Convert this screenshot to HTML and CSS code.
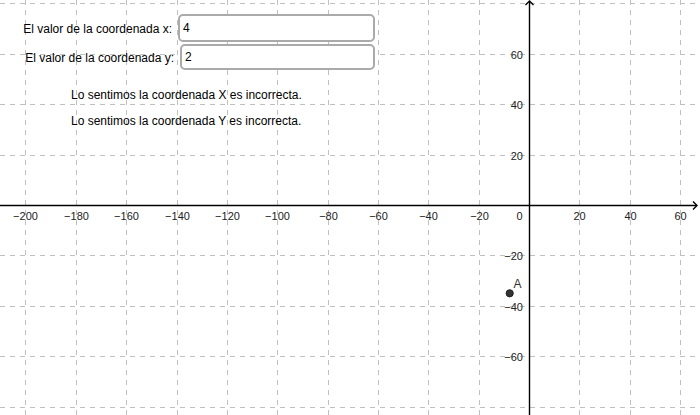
FILE: index.html
```html
<!DOCTYPE html>
<html lang="es">
<head>
<meta charset="utf-8">
<title>Coordenadas</title>
<link rel="stylesheet" href="styles.css">
</head>
<body>
<div class="canvas">
  <svg class="graph" width="700" height="415" viewBox="0 0 700 415" xmlns="http://www.w3.org/2000/svg">
    <g class="grid">
      <line x1="25.5" y1="0" x2="25.5" y2="415"/>
      <line x1="76.5" y1="0" x2="76.5" y2="415"/>
      <line x1="126.5" y1="0" x2="126.5" y2="415"/>
      <line x1="177.5" y1="0" x2="177.5" y2="415"/>
      <line x1="227.5" y1="0" x2="227.5" y2="415"/>
      <line x1="277.5" y1="0" x2="277.5" y2="415"/>
      <line x1="328.5" y1="0" x2="328.5" y2="415"/>
      <line x1="378.5" y1="0" x2="378.5" y2="415"/>
      <line x1="428.5" y1="0" x2="428.5" y2="415"/>
      <line x1="479.5" y1="0" x2="479.5" y2="415"/>
      <line x1="579.5" y1="0" x2="579.5" y2="415"/>
      <line x1="630.5" y1="0" x2="630.5" y2="415"/>
      <line x1="680.5" y1="0" x2="680.5" y2="415"/>
      <line x1="0" y1="3.5" x2="700" y2="3.5"/>
      <line x1="0" y1="54.5" x2="700" y2="54.5"/>
      <line x1="0" y1="104.5" x2="700" y2="104.5"/>
      <line x1="0" y1="155.5" x2="700" y2="155.5"/>
      <line x1="0" y1="255.5" x2="700" y2="255.5"/>
      <line x1="0" y1="306.5" x2="700" y2="306.5"/>
      <line x1="0" y1="356.5" x2="700" y2="356.5"/>
      <line x1="0" y1="407.5" x2="700" y2="407.5"/>
    </g>
    <g class="axes">
      <line x1="0" y1="205.5" x2="697" y2="205.5"/>
      <line x1="529.5" y1="2" x2="529.5" y2="415"/>
      <polyline points="693,201.5 697,205.5 693,209.5"/>
      <polyline points="525.5,5 529.5,1 533.5,5"/>
    </g>
    <g class="labels xl">
      <text x="25.5" y="219.5">−200</text>
      <text x="76.5" y="219.5">−180</text>
      <text x="126.5" y="219.5">−160</text>
      <text x="177.5" y="219.5">−140</text>
      <text x="227.5" y="219.5">−120</text>
      <text x="277.5" y="219.5">−100</text>
      <text x="328.5" y="219.5">−80</text>
      <text x="378.5" y="219.5">−60</text>
      <text x="428.5" y="219.5">−40</text>
      <text x="479.5" y="219.5">−20</text>
      <text x="519.5" y="219.5">0</text>
      <text x="579.5" y="219.5">20</text>
      <text x="630.5" y="219.5">40</text>
      <text x="680.5" y="219.5">60</text>
    </g>
    <g class="labels yl">
      <text x="523" y="58.5">60</text>
      <text x="523" y="108.5">40</text>
      <text x="523" y="159.5">20</text>
      <text x="523" y="259.5">−20</text>
      <text x="523" y="310.5">−40</text>
      <text x="523" y="360.5">−60</text>
    </g>
    <circle class="point" cx="509.7" cy="293.3" r="3.6"/>
    <text class="point-label" x="513.5" y="288">A</text>
  </svg>

  <div class="widgets">
    <div class="field field-x">
      <span class="field-label">El valor de la coordenada x:</span>
      <div class="field-input">4</div>
    </div>
    <div class="field field-y">
      <span class="field-label">El valor de la coordenada y:</span>
      <div class="field-input">2</div>
    </div>
    <div class="messages">
      <p class="msg">Lo sentimos la coordenada X es incorrecta.</p>
      <p class="msg">Lo sentimos la coordenada Y es incorrecta.</p>
    </div>
  </div>
</div>
</body>
</html>
```
FILE: styles.css
```css
html, body {
  margin: 0;
  padding: 0;
  background: #ffffff;
}

.canvas {
  position: relative;
  width: 700px;
  height: 415px;
  overflow: hidden;
  background: #ffffff;
  font-family: "Liberation Sans", Arial, sans-serif;
  color: #000;
}

.graph {
  display: block;
}

.grid line {
  stroke: #c0c0c0;
  stroke-width: 1;
  stroke-dasharray: 5 5;
}

.axes line,
.axes polyline {
  stroke: #000;
  stroke-width: 1.4;
  fill: none;
}

.labels text {
  font-family: "Liberation Sans", Arial, sans-serif;
  font-size: 11px;
  fill: #222;
}

.xl text {
  text-anchor: middle;
}

.yl text {
  text-anchor: end;
}

.point {
  fill: #333;
  stroke: #222;
  stroke-width: 1;
}

.point-label {
  font-family: "Liberation Sans", Arial, sans-serif;
  font-size: 12px;
  fill: #333;
}

.widgets {
  position: absolute;
  left: 0;
  top: 0;
  display: flex;
  flex-direction: column;
  padding-top: 14px;
}

.field {
  display: flex;
  align-items: center;
  font-size: 12px;
}

.field-label {
  width: 172px;
  text-align: right;
  white-space: nowrap;
  padding-top: 2px;
}

.field-input {
  box-sizing: border-box;
  border: 2px solid #aaaaaa;
  border-radius: 5px;
  background: #fff;
  padding-left: 3px;
  display: flex;
  align-items: center;
  font-size: 12px;
}

.field-x .field-input {
  margin-left: 6px;
  width: 197px;
  height: 28px;
}

.field-y {
  margin-top: 2px;
}

.field-y .field-label {
  width: 174px;
}

.field-y .field-input {
  margin-left: 6px;
  width: 195px;
  height: 26px;
}

.messages {
  margin-left: 71px;
  margin-top: 18px;
  display: flex;
  flex-direction: column;
  gap: 12px;
}

.msg {
  margin: 0;
  font-size: 12px;
  line-height: 14px;
  white-space: nowrap;
}
```
